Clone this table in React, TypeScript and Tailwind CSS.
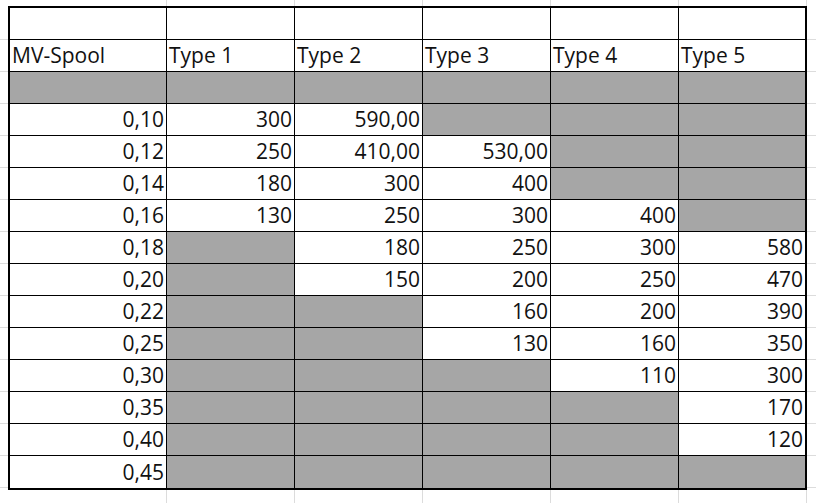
import React from "react";

const G = null;

const rows: [string, (string | null)[]][] = [
  ["0,10", ["300", "590,00", G, G, G]],
  ["0,12", ["250", "410,00", "530,00", G, G]],
  ["0,14", ["180", "300", "400", G, G]],
  ["0,16", ["130", "250", "300", "400", G]],
  ["0,18", [G, "180", "250", "300", "580"]],
  ["0,20", [G, "150", "200", "250", "470"]],
  ["0,22", [G, G, "160", "200", "390"]],
  ["0,25", [G, G, "130", "160", "350"]],
  ["0,30", [G, G, G, "110", "300"]],
  ["0,35", [G, G, G, G, "170"]],
  ["0,40", [G, G, G, G, "120"]],
  ["0,45", [G, G, G, G, G]],
];

const colW = ["w-[157px]", "w-[128px]", "w-[128px]", "w-[128px]", "w-[128px]", "w-[126px]"];

function Cell({
  i,
  last,
  gray,
  right,
  children,
}: {
  i: number;
  last: boolean;
  gray?: boolean;
  right?: boolean;
  children?: React.ReactNode;
}) {
  return (
    <div
      className={[
        colW[i],
        "h-[32px] shrink-0 flex items-end px-[2px] pb-[4px] leading-[24px] whitespace-nowrap",
        i < 5 ? "border-r border-black" : "",
        last ? "" : "border-b border-black",
        gray ? "bg-[#a6a6a6]" : "bg-white",
        right ? "justify-end" : "justify-start",
      ].join(" ")}
    >
      {children}
    </div>
  );
}

function GridStrip({ h }: { h: string }) {
  return (
    <div className={`flex ${h}`}>
      <div className="w-[167px] shrink-0 border-r border-[#dcdcdc]" />
      <div className="w-[128px] shrink-0 border-r border-[#dcdcdc]" />
      <div className="w-[128px] shrink-0 border-r border-[#dcdcdc]" />
      <div className="w-[128px] shrink-0 border-r border-[#dcdcdc]" />
      <div className="w-[128px] shrink-0 border-r border-[#dcdcdc]" />
      <div className="w-[128px] shrink-0 border-r border-[#dcdcdc]" />
      <div className="flex-1" />
    </div>
  );
}

function SideStrip({ w }: { w: string }) {
  return (
    <div className={`${w} shrink-0 flex flex-col`}>
      <div className="h-[34px] border-b border-[#dcdcdc]" />
      {Array.from({ length: 14 }).map((_, k) => (
        <div key={k} className="h-[32px] shrink-0 border-b border-[#dcdcdc]" />
      ))}
    </div>
  );
}

export default function App() {
  const total = 15;
  return (
    <div className="w-[816px] h-[503px] bg-white overflow-hidden font-['Open_Sans',sans-serif] text-[21px] text-[#111]">
      <GridStrip h="h-[6px]" />
      <div className="flex">
        <SideStrip w="w-[8px]" />
        <div className="border-2 border-black flex flex-col">
          <div className="flex">
            {[0, 1, 2, 3, 4, 5].map((i) => (
              <Cell key={i} i={i} last={false} />
            ))}
          </div>
          <div className="flex">
            {["MV-Spool", "Type 1", "Type 2", "Type 3", "Type 4", "Type 5"].map((t, i) => (
              <Cell key={i} i={i} last={false}>
                {t}
              </Cell>
            ))}
          </div>
          <div className="flex">
            {[0, 1, 2, 3, 4, 5].map((i) => (
              <Cell key={i} i={i} last={false} gray />
            ))}
          </div>
          {rows.map(([label, vals], r) => {
            const last = r + 3 === total - 1;
            return (
              <div key={label} className="flex">
                <Cell i={0} last={last} right>
                  {label}
                </Cell>
                {vals.map((v, c) => (
                  <Cell key={c} i={c + 1} last={last} gray={v === null} right>
                    {v}
                  </Cell>
                ))}
              </div>
            );
          })}
        </div>
        <SideStrip w="flex-1" />
      </div>
      <GridStrip h="h-[14px]" />
    </div>
  );
}
